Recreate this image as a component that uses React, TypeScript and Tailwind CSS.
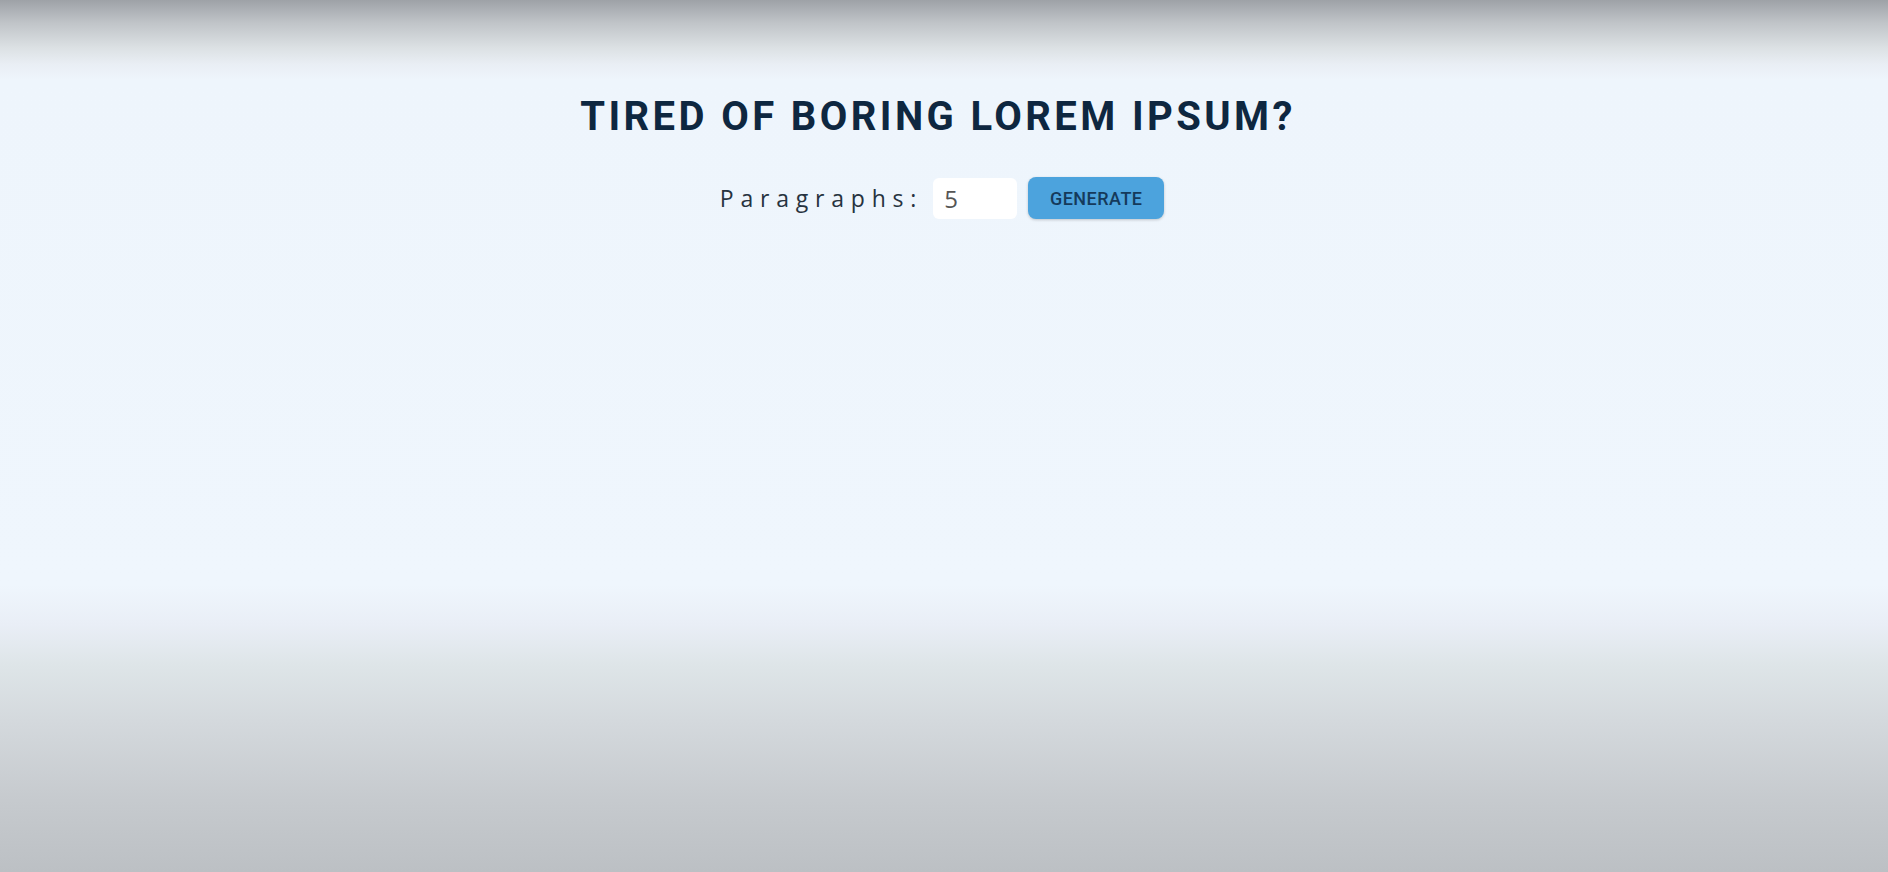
import React, { useState } from "react"

const App = () => {
    const [count, setCount] = useState<number>(5)

    return (
        <div className="w-full h-[872px] bg-[linear-gradient(to_bottom,#9ea2a7_0px,#bfc3c7_22px,#dce1e4_48px,#e9eef4_64px,#eef5fc_80px,#eff6fd_585px,#e9eef6_625px,#dee5e8_665px,#d4d9dd_720px,#c6cace_800px,#bcc0c4_872px)]">
            <section className="flex flex-col items-center pt-[97px] pr-[12px]">
                <h3 className="font-['Roboto',sans-serif] font-bold text-[40px] leading-none tracking-[3.4px] text-[#0e2740] uppercase">
                    Tired of boring lorem ipsum?
                </h3>
                <form className="flex items-center mt-[40px] ml-[8px]" onSubmit={(e) => e.preventDefault()}>
                    <label htmlFor="amount" className="font-['Open_Sans',sans-serif] text-[23px] tracking-[6.8px] text-[#27333f] mr-[10px]">
                        Paragraphs:
                    </label>
                    <input
                        id="amount"
                        type="number"
                        value={count}
                        onChange={(e) => setCount(Number(e.target.value))}
                        className="w-[84px] h-[41px] bg-white rounded-[6px] pl-[11px] font-['Open_Sans',sans-serif] text-[24px] text-[#555] outline-none [appearance:textfield] [&::-webkit-inner-spin-button]:appearance-none"
                    />
                    <button
                        type="submit"
                        className="ml-[11px] w-[136px] h-[42px] bg-[#4ca3dd] rounded-[8px] shadow-[0_1px_3px_rgba(0,0,0,0.2)] font-['Roboto',sans-serif] font-medium text-[18px] tracking-[0.5px] text-[#153a5b] uppercase"
                    >
                        Generate
                    </button>
                </form>
            </section>
        </div>
    )
}

export default App
